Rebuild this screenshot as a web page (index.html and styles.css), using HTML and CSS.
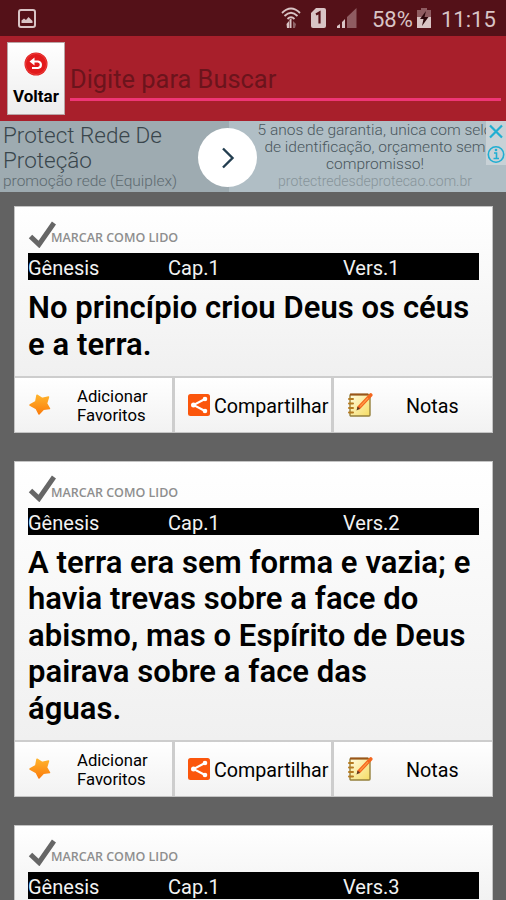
FILE: index.html
```html
<!DOCTYPE html>
<html lang="pt-BR">
<head>
    <meta charset="UTF-8">
    <meta name="viewport" content="width=device-width, initial-scale=1.0">
    <title>Gênesis 1</title>
    <link rel="stylesheet" href="styles.css">
</head>
<body>
    <!-- shared icons -->
    <svg class="icon-defs" width="0" height="0">
        <defs>
            <linearGradient id="starFill" x1="0" y1="0" x2="0" y2="1">
                <stop offset="0" stop-color="#ffb32c"/>
                <stop offset="1" stop-color="#fb7d0c"/>
            </linearGradient>
            <linearGradient id="noteFill" x1="0" y1="0" x2="1" y2="1">
                <stop offset="0" stop-color="#fffbe0"/>
                <stop offset="1" stop-color="#f5dc62"/>
            </linearGradient>
        </defs>
        <symbol id="check" viewBox="0 0 28 27">
            <path d="M2.5 15.5L11 23.5L26 2" fill="none" stroke="#666" stroke-width="5"/>
        </symbol>
        <symbol id="star" viewBox="0 0 24 24">
            <path d="M9 2.2L14 5.5L20.5 4L18.5 10.5L21.5 15.600L15.500 16.300L11 21L8.300 15.600L2 12L7.800 8.700Z" fill="url(#starFill)" stroke="url(#starFill)" stroke-width="1.500" stroke-linejoin="round"/>
        </symbol>
        <symbol id="share" viewBox="0 0 22 22">
            <rect width="22" height="22" rx="2.5" fill="#fb560c"/>
            <path d="M17 5L5.5 11L17 17" fill="none" stroke="#fff" stroke-width="2"/>
            <circle cx="17" cy="5" r="2.300" fill="#fff"/>
            <circle cx="5.500" cy="11" r="2.500" fill="#fff"/>
            <circle cx="17" cy="17" r="2.300" fill="#fff"/>
        </symbol>
        <symbol id="note" viewBox="0 0 26 26">
            <rect x="3" y="2.5" width="20" height="21.500" rx="1" fill="url(#noteFill)" stroke="#94803c" stroke-width="1.4"/>
            <path d="M3 2.500H21" stroke="#9a5518" stroke-width="2"/>
            <path d="M2 7H6M2 11.5H6M2 16H6M2 20.500H6" stroke="#b57a20" stroke-width="2" stroke-linecap="round"/>
            <path d="M12 15.500L23.800 3" stroke="#f4661e" stroke-width="3.600" stroke-linecap="round"/>
            <path d="M13 14.500L21 6" stroke="#ff9a45" stroke-width="1.200"/>
            <path d="M9.500 18.500L10.600 14.600L13 16.800Z" fill="#5a3a20"/>
        </symbol>
    </svg>

    <div class="status-bar">
        <svg class="status-picture" width="18" height="19" viewBox="0 0 18 19">
            <rect x="1" y="1" width="16" height="17" rx="2" fill="none" stroke="#d9c4c5" stroke-width="2"/>
            <path d="M3.500 14V11.500L6 9.500L8 11L10.500 8L14.500 12V14Z" fill="#d9c4c5"/>
        </svg>
        <svg class="status-wifi" width="20" height="22" viewBox="0 0 20 22">
            <g fill="none" stroke="#d9c4c5" stroke-width="1.800">
                <path d="M1 6Q10 -3 19 6"/>
                <path d="M3.500 9Q10 2.500 16.500 9"/>
                <path d="M6.500 12Q10 8.500 13.500 12"/>
            </g>
            <path d="M8.500 12.500L10.500 11.500V21H8.500Z" fill="#d9c4c5"/>
            <path d="M5.500 17L8 14V21H6Z" fill="#d9c4c5"/>
            <path d="M12 14L15 17L14 21H12Z" fill="#8f6468"/>
        </svg>
        <svg class="status-sim" width="15" height="20" viewBox="0 0 15 20">
            <path d="M5 0H13Q15 0 15 2V18Q15 20 13 20H2Q0 20 0 18V5Z" fill="#d9c4c5"/>
            <path d="M5 6.500L8.500 4.500V15.500" fill="none" stroke="#541118" stroke-width="2.200"/>
        </svg>
        <svg class="status-signal" width="20" height="20" viewBox="0 0 20 20">
            <path d="M0 20V18L3 16V20Z M5 20V14L8 11V20Z" fill="#d9c4c5"/>
            <path d="M10 20V9L19.500 0V20Z" fill="#8f5c61"/>
        </svg>
        <span class="battery-text">58%</span>
        <svg class="status-battery" width="14" height="20" viewBox="0 0 14 20">
            <path d="M4 0H10V2H14V20H0V2H4Z" fill="#8f5c61"/>
            <path d="M0 9H14V20H0Z" fill="#d9c4c5"/>
            <path d="M9 3L3 11H6.500L5 18L11.500 9H7.500Z" fill="#2c080c"/>
        </svg>
        <span class="clock">11:15</span>
    </div>

    <div class="header">
        <button class="back-button">
            <svg width="24" height="24" viewBox="0 0 24 24">
                <circle cx="12" cy="12" r="11.500" fill="#e21a1c"/>
                <circle cx="12" cy="12" r="10.500" fill="none" stroke="#ea403c" stroke-width="1"/>
                <path d="M8 9.500H14A3.500 3.300 0 0 1 14 16H8" fill="none" stroke="#fff" stroke-width="2.200"/>
                <path d="M10.500 5.500V13.500L5.500 9.500Z" fill="#fff"/>
            </svg>
            <span>Voltar</span>
        </button>
        <input class="search" type="text" placeholder="Digite para Buscar">
    </div>

    <div class="ad">
        <div class="ad-left">
            <div class="ad-title">Protect Rede De<br>Proteção</div>
            <div class="ad-sub">promoção rede (Equiplex)</div>
        </div>
        <div class="ad-right">
            <div class="ad-text">5 anos de garantia, unica com selo<br>de identificação, orçamento sem<br>compromisso!</div>
            <div class="ad-url">protectredesdeprotecao.com.br</div>
        </div>
        <div class="ad-arrow">
            <svg width="14" height="22" viewBox="0 0 14 22">
                <path d="M2 1.500L11.500 11L2 20.500" fill="none" stroke="#233e50" stroke-width="2.400"/>
            </svg>
        </div>
        <div class="ad-controls">
            <svg width="20" height="44" viewBox="0 0 20 44">
                <path d="M4 4.500L16 16.500M16 4.500L4 16.500" stroke="#20aed2" stroke-width="2.200"/>
                <circle cx="10" cy="33.500" r="7.700" fill="none" stroke="#20aed2" stroke-width="1.600"/>
                <path d="M8 32H10.500V37.500M7.500 37.500H13" fill="none" stroke="#20aed2" stroke-width="1.600"/>
                <circle cx="10" cy="29" r="1.300" fill="#20aed2"/>
            </svg>
        </div>
    </div>

    <div class="verses">
        <div class="card">
            <div class="card-body">
                <div class="mark"><svg width="28" height="27"><use href="#check"/></svg><span>MARCAR COMO LIDO</span></div>
                <div class="reference"><span>Gênesis</span><span>Cap.1</span><span>Vers.1</span></div>
                <p class="verse">No princípio criou Deus os céus<br>e a terra.</p>
            </div>
            <div class="actions">
                <div class="action favorite"><svg width="24" height="24"><use href="#star"/></svg><span>Adicionar<br>Favoritos</span></div>
                <div class="action share"><svg width="22" height="22"><use href="#share"/></svg><span>Compartilhar</span></div>
                <div class="action notes"><svg width="26" height="26"><use href="#note"/></svg><span>Notas</span></div>
            </div>
        </div>

        <div class="card">
            <div class="card-body">
                <div class="mark"><svg width="28" height="27"><use href="#check"/></svg><span>MARCAR COMO LIDO</span></div>
                <div class="reference"><span>Gênesis</span><span>Cap.1</span><span>Vers.2</span></div>
                <p class="verse">A terra era sem forma e vazia; e<br>havia trevas sobre a face do<br>abismo, mas o Espírito de Deus<br>pairava sobre a face das<br>águas.</p>
            </div>
            <div class="actions">
                <div class="action favorite"><svg width="24" height="24"><use href="#star"/></svg><span>Adicionar<br>Favoritos</span></div>
                <div class="action share"><svg width="22" height="22"><use href="#share"/></svg><span>Compartilhar</span></div>
                <div class="action notes"><svg width="26" height="26"><use href="#note"/></svg><span>Notas</span></div>
            </div>
        </div>

        <div class="card">
            <div class="card-body">
                <div class="mark"><svg width="28" height="27"><use href="#check"/></svg><span>MARCAR COMO LIDO</span></div>
                <div class="reference"><span>Gênesis</span><span>Cap.1</span><span>Vers.3</span></div>
            </div>
        </div>
    </div>
</body>
</html>
```

FILE: styles.css
```css
* {
    box-sizing: border-box;
}
body {
    margin: 0;
    height: 900px;
    overflow: hidden;
    background: #626262;
    font-family: Roboto, sans-serif;
    color: #000;
    display: flex;
    flex-direction: column;
}
svg {
    display: block;
    flex-shrink: 0;
}
.icon-defs {
    position: absolute;
}

/* status bar */
.status-bar {
    height: 36px;
    flex-shrink: 0;
    background: #541118;
    color: #d9c4c5;
    display: flex;
    align-items: center;
    padding: 0 11px 0 18px;
    font-size: 22px;
}
.status-picture {
    margin-right: auto;
}
.status-wifi {
    margin-right: 10px;
}
.status-sim {
    margin-right: 11px;
}
.status-signal {
    margin-right: 15px;
}
.battery-text {
    width: 45px;
}
.clock {
    width: 54px;
    margin-left: 10px;
    white-space: nowrap;
}
.battery-text, .clock {
    padding-top: 2px;
}

/* search header */
.header {
    height: 85px;
    flex-shrink: 0;
    background: #a81f2b;
    display: flex;
    padding: 6px 5px 6px 7px;
}
.back-button {
    width: 58px;
    height: 73px;
    padding: 9px 0 0;
    border: 1px solid #b9a5a6;
    background: linear-gradient(#fff, #ededed);
    font-family: Roboto, sans-serif;
    font-size: 17px;
    font-weight: bold;
    color: #000;
    display: flex;
    flex-direction: column;
    align-items: center;
    gap: 10px;
}
.search {
    flex: 1;
    min-width: 0;
    height: 59px;
    margin-left: 5px;
    padding: 17px 0 0;
    border: none;
    border-bottom: 3px solid #ef3676;
    background: none;
    font-family: Roboto, sans-serif;
    font-size: 25.4px;
}
.search::placeholder {
    color: #6b141c;
    opacity: 1;
}

/* ad banner */
.ad {
    position: relative;
    height: 71px;
    flex-shrink: 0;
    display: flex;
    background: #b0bec5;
    overflow: hidden;
    font-weight: 300;
}
.ad-left {
    width: 229px;
    padding: 2px 0 0 3px;
    background: #9eabb1;
}
.ad-title {
    font-size: 22.5px;
    line-height: 25px;
    color: #39464c;
}
.ad-sub {
    font-size: 15.5px;
    line-height: 16px;
    color: #5d6a70;
}
.ad-right {
    flex: 1;
    padding-top: 1px;
    text-align: center;
    white-space: nowrap;
    padding-left: 15px;
}
.ad-text {
    font-size: 15.5px;
    line-height: 17px;
    color: #4a575d;
}
.ad-url {
    font-size: 14px;
    line-height: 16px;
    color: #87949a;
}
.ad-arrow {
    position: absolute;
    left: 198px;
    top: 7px;
    width: 59px;
    height: 59px;
    border-radius: 50%;
    background: #fff;
    display: flex;
    align-items: center;
    justify-content: center;
}
.ad-controls {
    position: absolute;
    right: 0;
    top: 0;
    background: #c8d1d6;
}

/* verse cards */
.verses {
    padding: 14px 13px 0 14px;
    display: flex;
    flex-direction: column;
    gap: 28px;
}
.card {
    flex-shrink: 0;
    border: 1px solid #c4c4c4;
    background: #cdcdcd;
}
.card-body {
    padding: 0 13px 12.5px;
    background: linear-gradient(#fff, #f0f0f0);
}
.mark {
    height: 46px;
    display: flex;
    padding-top: 13.5px;
}
.mark span {
    font-family: "Open Sans", sans-serif;
    font-size: 12.5px;
    font-weight: 600;
    line-height: 16px;
    color: #8e8e8e;
    margin: 9.5px 0 0 -5px;
}
.reference {
    height: 27px;
    background: #000;
    color: #f2f2f2;
    font-size: 20px;
    line-height: 30px;
    display: grid;
    grid-template-columns: 140px 175px 1fr;
}
.verse {
    margin: 10px 0 0;
    font-size: 31px;
    font-weight: 600;
    line-height: 36.5px;
    letter-spacing: 0.06px;
    white-space: nowrap;
}
.actions {
    margin-top: 2.5px;
    height: 53.5px;
    display: grid;
    grid-template-columns: 157px 156px 1fr;
    gap: 3px;
}
.action {
    display: flex;
    align-items: center;
    background: linear-gradient(#fff, #f2f2f2);
    font-size: 19.7px;
}
.action span {
    padding-top: 2.5px;
}
.favorite {
    padding-left: 13px;
    font-size: 16.7px;
    line-height: 19.5px;
}
.favorite span {
    margin-left: 25px;
}
.share {
    padding-left: 13px;
}
.share span {
    margin-left: 4px;
}
.notes {
    padding-left: 13px;
}
.notes span {
    margin-left: 33px;
}
```
